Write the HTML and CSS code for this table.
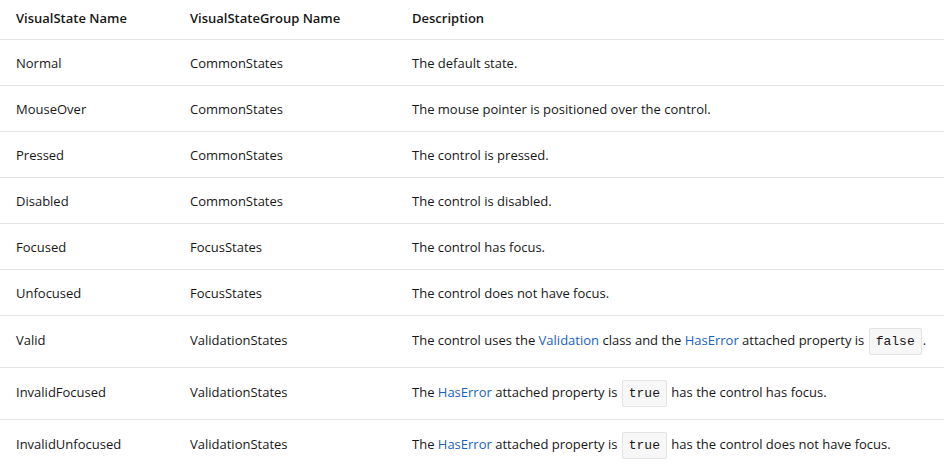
FILE: index.html
```html
<!DOCTYPE html>
<html>
<head>
<meta charset="utf-8">
<link rel="stylesheet" href="styles.css">
</head>
<body>
<table class="states">
  <thead>
    <tr><th class="c1">VisualState Name</th><th class="c2">VisualStateGroup Name</th><th class="c3">Description</th></tr>
  </thead>
  <tbody>
    <tr><td>Normal</td><td>CommonStates</td><td>The default state.</td></tr>
    <tr><td>MouseOver</td><td>CommonStates</td><td>The mouse pointer is positioned over the control.</td></tr>
    <tr><td>Pressed</td><td>CommonStates</td><td>The control is pressed.</td></tr>
    <tr><td>Disabled</td><td>CommonStates</td><td>The control is disabled.</td></tr>
    <tr><td>Focused</td><td>FocusStates</td><td>The control has focus.</td></tr>
    <tr><td>Unfocused</td><td>FocusStates</td><td>The control does not have focus.</td></tr>
    <tr class="coderow"><td>Valid</td><td>ValidationStates</td><td>The control uses the <a href="#">Validation</a> class and the <a href="#">HasError</a> attached property is <code>false</code>.</td></tr>
    <tr class="coderow"><td>InvalidFocused</td><td>ValidationStates</td><td>The <a href="#">HasError</a> attached property is <code>true</code> has the control has focus.</td></tr>
    <tr class="coderow last"><td>InvalidUnfocused</td><td>ValidationStates</td><td>The <a href="#">HasError</a> attached property is <code>true</code> has the control does not have focus.</td></tr>
  </tbody>
</table>
</body>
</html>
```
FILE: styles.css
```css
html, body {
  margin: 0;
  padding: 0;
  background: #ffffff;
}
body {
  font-family: "Open Sans", "Noto Sans", sans-serif;
  font-size: 13px;
  color: #171717;
}
.states {
  width: 944px;
  border-collapse: collapse;
  table-layout: fixed;
}
.states th, .states td {
  text-align: left;
  padding: 0 16px;
  vertical-align: middle;
  white-space: nowrap;
}
.states th {
  font-weight: 600;
  height: 36px;
  padding-bottom: 3px;
  border-bottom: 1px solid #e3e3e3;
}
.states td {
  height: 45px;
  border-bottom: 1px solid #e3e3e3;
}
.states tr.coderow td {
  height: 47px;
  padding-bottom: 4px;
}
.states tr.last td {
  border-bottom: none;
}
.c1 { width: 142px; }
.c2 { width: 190px; }
.states a {
  color: #1a62c0;
  text-decoration: none;
}
.states code {
  font-family: "Liberation Mono", monospace;
  font-size: 13px;
  background: #f7f7f7;
  border: 1px solid #e3e3e3;
  border-radius: 2px;
  padding: 5px 6px;
  margin: 0 1px;
}
```
